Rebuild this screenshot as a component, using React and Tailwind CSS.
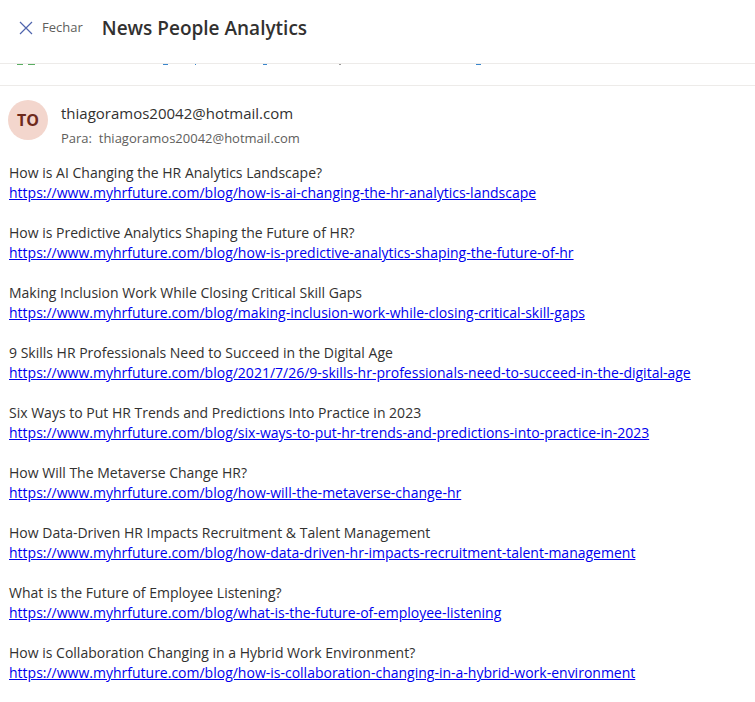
import React from 'react';

const items = [
  ['How is AI Changing the HR Analytics Landscape?', 'https://www.myhrfuture.com/blog/how-is-ai-changing-the-hr-analytics-landscape'],
  ['How is Predictive Analytics Shaping the Future of HR?', 'https://www.myhrfuture.com/blog/how-is-predictive-analytics-shaping-the-future-of-hr'],
  ['Making Inclusion Work While Closing Critical Skill Gaps', 'https://www.myhrfuture.com/blog/making-inclusion-work-while-closing-critical-skill-gaps'],
  ['9 Skills HR Professionals Need to Succeed in the Digital Age', 'https://www.myhrfuture.com/blog/2021/7/26/9-skills-hr-professionals-need-to-succeed-in-the-digital-age'],
  ['Six Ways to Put HR Trends and Predictions Into Practice in 2023', 'https://www.myhrfuture.com/blog/six-ways-to-put-hr-trends-and-predictions-into-practice-in-2023'],
  ['How Will The Metaverse Change HR?', 'https://www.myhrfuture.com/blog/how-will-the-metaverse-change-hr'],
  ['How Data-Driven HR Impacts Recruitment & Talent Management', 'https://www.myhrfuture.com/blog/how-data-driven-hr-impacts-recruitment-talent-management'],
  ['What is the Future of Employee Listening?', 'https://www.myhrfuture.com/blog/what-is-the-future-of-employee-listening'],
  ['How is Collaboration Changing in a Hybrid Work Environment?', 'https://www.myhrfuture.com/blog/how-is-collaboration-changing-in-a-hybrid-work-environment'],
];

export default function App() {
  return (
    <div className="w-[755px] h-[702px] bg-white overflow-hidden font-['Open_Sans',sans-serif] text-[#323130]">
      {/* header */}
      <div className="h-[64px] flex items-start pt-[14px] border-b border-[#edebe9]">
        <button className="flex items-center h-[28px] ml-[19px] mr-[19px] text-[13px] text-[#605e5c]">
          <svg width="14" height="14" viewBox="0 0 14 14" className="mr-[9px]">
            <path d="M1 1 L13 13 M13 1 L1 13" stroke="#4f64ad" strokeWidth="1.2" />
          </svg>
          Fechar
        </button>
        <h1 className="text-[19px] leading-[28px] font-semibold text-[#323130]">News People Analytics</h1>
      </div>

      {/* clipped strip of the previous message */}
      <div className="h-[22px] border-b border-[#edebe9] flex items-start">
        <div className="ml-[17px] w-[6px] h-[1px] bg-[#5aae62]"></div>
        <div className="ml-[5px] w-[7px] h-[1px] bg-[#5aae62]"></div>
        <div className="ml-[128px] w-[5px] h-[1px] bg-[#3a86cc]"></div>
        <div className="ml-[27px] w-[1px] h-[1px] bg-[#3a86cc]"></div>
        <div className="ml-[67px] w-[4px] h-[1px] bg-[#3a86cc]"></div>
        <div className="ml-[72px] w-[2px] h-[1px] bg-[#999]"></div>
        <div className="ml-[135px] w-[5px] h-[1px] bg-[#3a86cc]"></div>
      </div>

      {/* sender */}
      <div className="flex items-start pt-[14px] pl-[8px]">
        <div className="w-[40px] h-[40px] rounded-full bg-[#f3d6cd] flex items-center justify-center text-[16px] font-bold text-[#6e2a1c]">
          TO
        </div>
        <div className="ml-[13px] mt-[2px]">
          <div className="text-[15px] leading-[22px] text-[#323130]">thiagoramos20042@hotmail.com</div>
          <div className="text-[13px] leading-[20px] mt-[4px] text-[#605e5c]">Para:&nbsp; thiagoramos20042@hotmail.com</div>
        </div>
      </div>

      {/* body */}
      <div className="pl-[9px] pt-[15px] text-[14px] leading-[20px]">
        {items.map(([title, url]) => (
          <div key={url} className="mb-[20px]">
            <div className="text-[#323130]">{title}</div>
            <a href={url} className="text-[#0000ee] underline">{url}</a>
          </div>
        ))}
      </div>
    </div>
  );
}
